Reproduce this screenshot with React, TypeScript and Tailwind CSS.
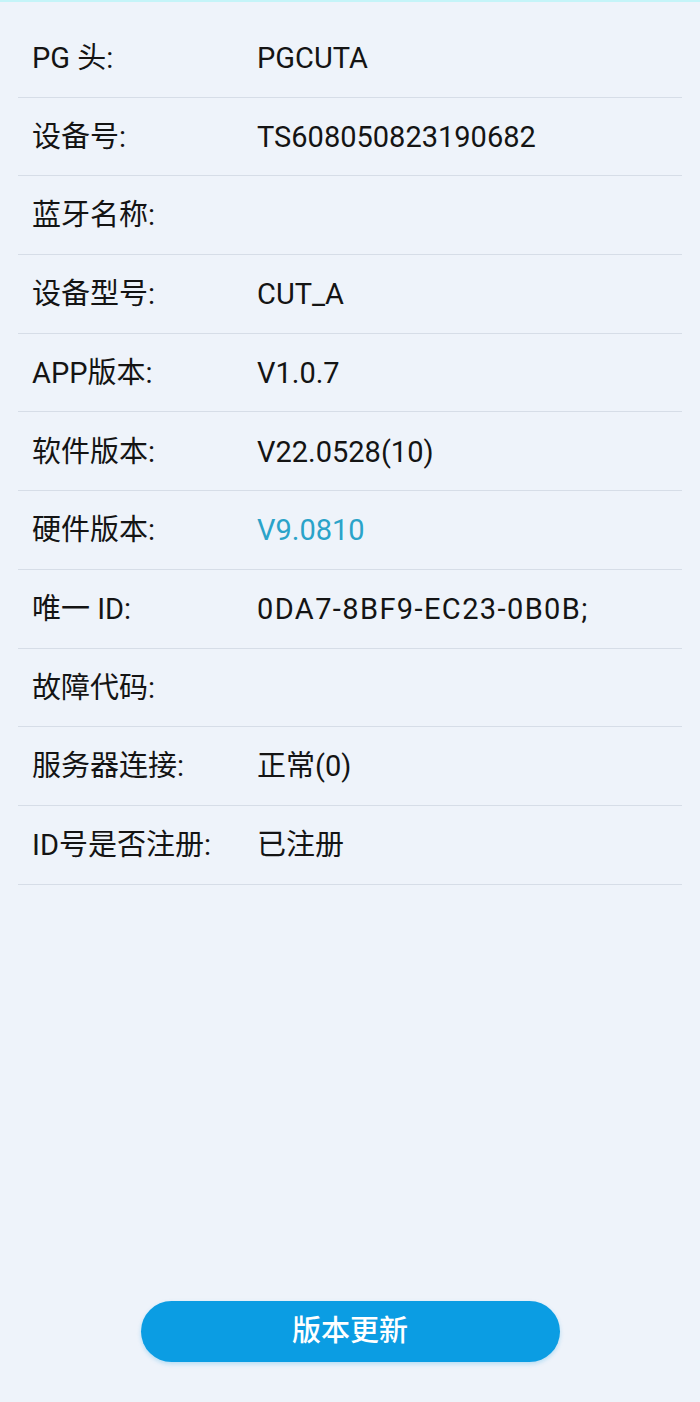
import React from "react";

const rows: { label: string; value: string; blue?: boolean; wide?: boolean }[] = [
  { label: "PG 头:", value: "PGCUTA" },
  { label: "设备号:", value: "TS608050823190682" },
  { label: "蓝牙名称:", value: "" },
  { label: "设备型号:", value: "CUT_A" },
  { label: "APP版本:", value: "V1.0.7" },
  { label: "软件版本:", value: "V22.0528(10)" },
  { label: "硬件版本:", value: "V9.0810", blue: true },
  { label: "唯一 ID:", value: "0DA7-8BF9-EC23-0B0B;", wide: true },
  { label: "故障代码:", value: "" },
  { label: "服务器连接:", value: "正常(0)" },
  { label: "ID号是否注册:", value: "已注册" },
];

export default function App() {
  return (
    <div
      className="w-[700px] h-[1402px] bg-[#eef3fa] flex flex-col"
      style={{ fontFamily: 'Roboto, "Noto Sans CJK SC", sans-serif' }}
    >
      <div className="h-[2px] bg-[#c4f4f8]" />
      <div className="px-[18px] pt-[17px] flex flex-col">
        {rows.map((r) => (
          <div
            key={r.label}
            className="h-[78.7px] border-b border-[#d6dde7] flex items-center text-[29px] text-[#141414] pt-[2px]"
          >
            <div className="w-[239px] pl-[14px] whitespace-nowrap">{r.label}</div>
            <div
              className={
                r.blue
                  ? "text-[#2aa3c9]"
                  : r.wide
                  ? "tracking-[1.4px] whitespace-nowrap"
                  : ""
              }
            >
              {r.value}
            </div>
          </div>
        ))}
      </div>
      <div className="flex-1" />
      <div className="flex justify-center pb-[40px]">
        <button className="w-[419px] h-[61px] rounded-full bg-[#0b9de3] text-white text-[29px] font-medium shadow-[0_2px_4px_rgba(11,157,227,0.25)]">
          版本更新
        </button>
      </div>
    </div>
  );
}
